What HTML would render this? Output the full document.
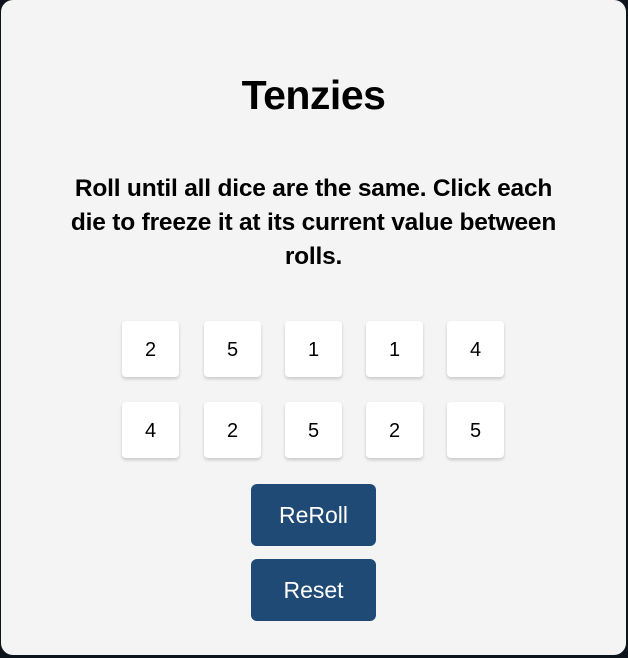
<!DOCTYPE html>
<html><head><style>
html,body{margin:0;padding:0;background:#0e141c;width:628px;height:658px;overflow:hidden}
.card{position:absolute;left:1px;top:0;width:625px;height:655px;background:#f4f4f4;border-radius:12px;font-family:"Liberation Sans",sans-serif;color:#000}
h1{position:absolute;left:0;right:0;top:70px;margin:0;text-align:center;font-size:41px;font-weight:bold;line-height:50px;letter-spacing:-0.5px}
p{position:absolute;left:-20px;right:-20px;top:172px;margin:0;text-align:center;font-size:24.5px;font-weight:bold;line-height:34px;letter-spacing:-0.2px}
.die{position:absolute;width:57px;height:56px;background:#fff;border-radius:4px;box-shadow:0 2px 3px rgba(0,0,0,.18);text-align:center;line-height:58px;font-size:20px}
.btn{position:absolute;left:250px;width:125px;height:62px;background:#1f4a76;border-radius:6px;color:#fff;text-align:center;line-height:62px;font-size:23px}
</style></head><body><div class="card">
<h1>Tenzies</h1>
<p>Roll until all dice are the same. Click each<br>die to freeze it at its current value between<br>rolls.</p>
<div class="die" style="left:121px;top:321px">2</div>
<div class="die" style="left:203px;top:321px">5</div>
<div class="die" style="left:284px;top:321px">1</div>
<div class="die" style="left:365px;top:321px">1</div>
<div class="die" style="left:446px;top:321px">4</div>
<div class="die" style="left:121px;top:402px">4</div>
<div class="die" style="left:203px;top:402px">2</div>
<div class="die" style="left:284px;top:402px">5</div>
<div class="die" style="left:365px;top:402px">2</div>
<div class="die" style="left:446px;top:402px">5</div>
<div class="btn" style="top:484px">ReRoll</div>
<div class="btn" style="top:559px">Reset</div>
</div></body></html>
